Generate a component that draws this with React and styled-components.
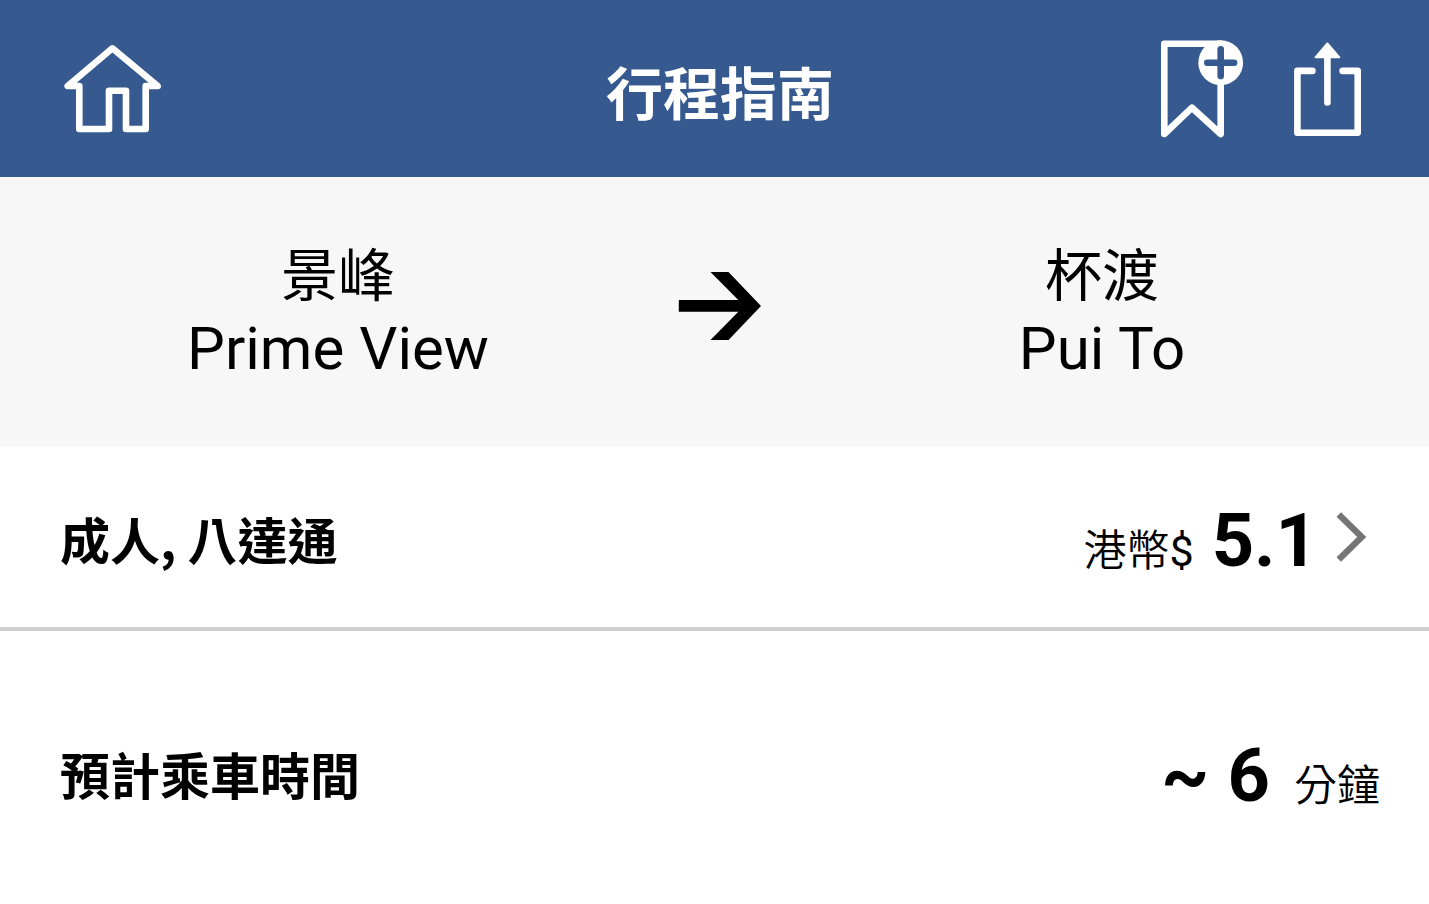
import React from 'react';
import styled, { createGlobalStyle } from 'styled-components';

const GlobalStyle = createGlobalStyle`
  * {
    box-sizing: border-box;
  }

  body {
    margin: 0;
    background: #ffffff;
    color: #000000;
    font-family: Roboto, "Noto Sans CJK TC", sans-serif;
  }
`

const Header = styled.header`
  display: grid;
  grid-template-columns: 1fr auto 1fr;
  align-items: center;
  height: 177px;
  padding: 0 49px 0 60px;
  background: #365a8f;
  color: #ffffff;
`

const Title = styled.h1`
  margin: 0;
  padding-top: 14px;
  font-size: 57px;
  line-height: 72px;
  font-weight: 700;
`

const Actions = styled.div`
  display: flex;
  align-items: center;
  justify-content: ${props => props.$end ? 'flex-end' : 'flex-start'};
  gap: 49px;
  padding: ${props => props.$end ? '0 17px 0 0' : '0 0 0 4px'};
`

const IconButton = styled.button`
  display: flex;
  padding: 0;
  border: 0;
  background: none;
  color: inherit;
  cursor: pointer;
`

const Stations = styled.section`
  display: grid;
  grid-template-columns: 1fr 208px 1fr;
  align-items: center;
  height: 270px;
  padding: 0 49px 12px 60px;
  background: #f7f7f7;
`

const Station = styled.div`
  padding-top: 14px;
  line-height: 72px;
  text-align: center;
`

const StationName = styled.div`
  font-size: ${props => props.$latin ? '60px' : '57px'};
`

const ArrowCell = styled.div`
  display: flex;
  justify-content: center;
`

const Row = styled.div`
  display: flex;
  align-items: center;
  justify-content: space-between;
  min-height: ${props => props.$tall ? '282px' : '184px'};
  padding: 0 49px 0 60px;
`

const RowButton = styled(Row).attrs({ as: 'button', type: 'button' })`
  width: 100%;
  border: 0;
  border-bottom: 4px solid #cfcfcf;
  background: none;
  color: inherit;
  font-family: inherit;
  cursor: pointer;
`

const Label = styled.span`
  padding-top: 2px;
  font-family: "Noto Sans CJK TC", sans-serif;
  font-size: 50px;
  line-height: 86px;
  font-weight: 700;
`

const Value = styled.span`
  display: flex;
  align-items: baseline;
  gap: ${props => props.$wide ? '24px' : '18px'};
  padding-top: 18px;
  line-height: 86px;
`

const Unit = styled.span`
  font-size: 43px;
  font-weight: 350;
`

const CurrencySign = styled.span`
  font-weight: 400;
`

const Amount = styled.strong`
  font-size: 74px;
  font-weight: 700;
`

const Price = styled.span`
  display: flex;
  align-items: center;
  gap: 18px;
  padding-right: 13px;
`

const HomeIcon = () => (
  <svg width="97" height="89" viewBox="0 0 97 89" fill="none" stroke="currentColor" strokeWidth="6.6" strokeLinejoin="round" aria-hidden="true">
    <path d="M48.4 4.3L3.7 42H15.3V85H45V46.7H62V85H81.7V42H93.7Z" />
  </svg>
)

const BookmarkAddIcon = () => (
  <svg width="84" height="98" viewBox="0 0 84 98" fill="none" stroke="currentColor" strokeWidth="6.6" strokeLinejoin="round" strokeLinecap="round" aria-hidden="true">
    <path d="M60.7 3.7H4.3V94L32 67.7L60.7 94V40" />
    <circle cx="60.7" cy="22.7" r="22.4" fill="currentColor" stroke="none" />
    <path d="M60.7 9.3V36.1M47.3 22.7H74.1" stroke="#365a8f" />
  </svg>
)

const ShareIcon = () => (
  <svg width="70" height="97" viewBox="0 -2 70 97" fill="none" stroke="currentColor" strokeWidth="6.6" strokeLinejoin="round" strokeLinecap="round" aria-hidden="true">
    <path d="M19.4 28.9H4.4V90.7H64.7V28.9H49.6M34.4 12V60.4" />
    <path d="M34.4 1.5L46.3 15.3H22.5Z" fill="currentColor" strokeWidth="2" />
  </svg>
)

const ArrowIcon = () => (
  <svg width="84" height="68" viewBox="0 0 84 68" fill="#000000" role="img" aria-label="往">
    <path d="M0.8 28H60.3L32.5 0H50.5L83 34L50.5 68H32.5L60.3 39.8H0.8Z" />
  </svg>
)

const ChevronIcon = () => (
  <svg width="31" height="52" viewBox="0 0 31 52" fill="none" stroke="#757575" strokeWidth="6.4" aria-hidden="true">
    <path d="M2.8 3.5L25.7 26L2.8 48.5" />
  </svg>
)

const stations = {
  from: { zh: '景峰', en: 'Prime View' },
  to: { zh: '杯渡', en: 'Pui To' },
}

const StationBlock = ({ station }) => (
  <Station>
    <StationName>{station.zh}</StationName>
    <StationName $latin lang="en">{station.en}</StationName>
  </Station>
)

export default function App() {
  return (
    <div lang="zh-Hant">
      <GlobalStyle />
      <Header>
        <Actions>
          <IconButton type="button" aria-label="主頁"><HomeIcon /></IconButton>
        </Actions>
        <Title>行程指南</Title>
        <Actions $end>
          <IconButton type="button" aria-label="加入書籤"><BookmarkAddIcon /></IconButton>
          <IconButton type="button" aria-label="分享"><ShareIcon /></IconButton>
        </Actions>
      </Header>
      <main>
        <Stations>
          <StationBlock station={stations.from} />
          <ArrowCell><ArrowIcon /></ArrowCell>
          <StationBlock station={stations.to} />
        </Stations>
        <RowButton>
          <Label>成人, 八達通</Label>
          <Price>
            <Value>
              <Unit>港幣<CurrencySign>$</CurrencySign></Unit>
              <Amount>5.1</Amount>
            </Value>
            <ChevronIcon />
          </Price>
        </RowButton>
        <Row $tall>
          <Label>預計乘車時間</Label>
          <Value $wide>
            <Amount>~ 6</Amount>
            <Unit>分鐘</Unit>
          </Value>
        </Row>
      </main>
    </div>
  );
}
